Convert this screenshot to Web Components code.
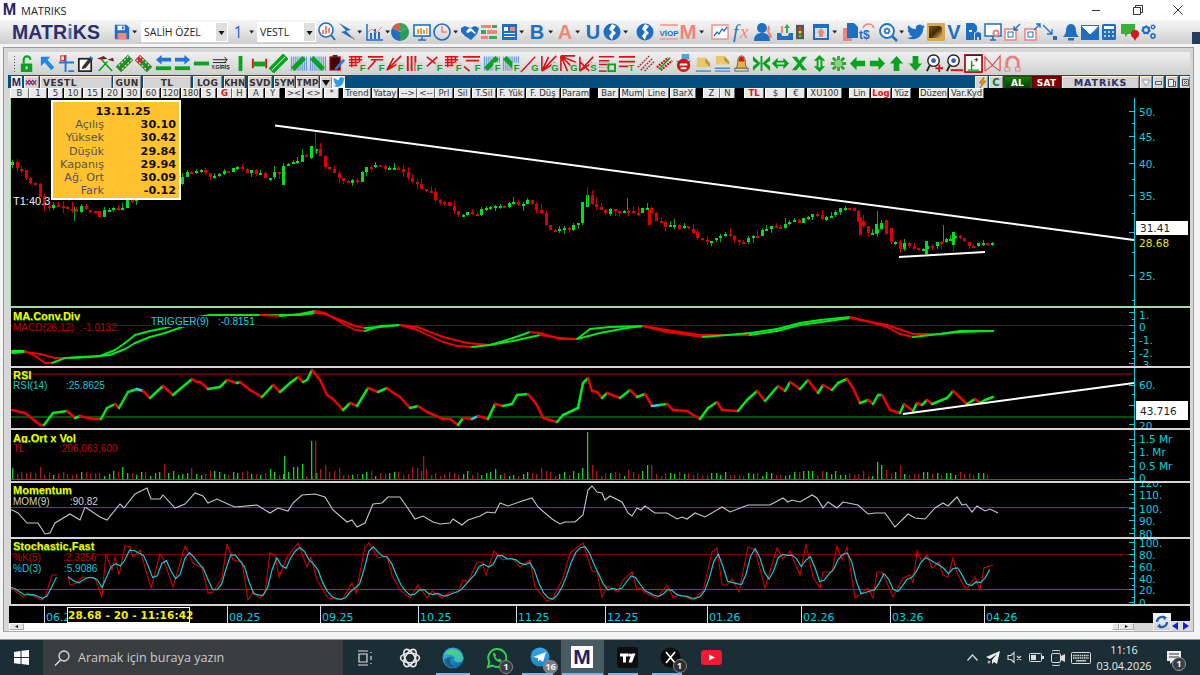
<!DOCTYPE html>
<html lang="tr"><head><meta charset="utf-8"><title>MATRIKS</title>
<style>html,body{margin:0;padding:0;width:1200px;height:675px;overflow:hidden;background:#fff}</style>
</head><body>
<mx-app>
  <mx-titlebar></mx-titlebar>
  <mx-maintoolbar></mx-maintoolbar>
  <mx-window>
    <mx-drawbar></mx-drawbar>
    <mx-tabbar></mx-tabbar>
    <mx-buttons></mx-buttons>
    <mx-panel kind="main">
      <mx-tooltip></mx-tooltip>
      <mx-label style="left:2px;top:98px;color:#eee;background:none;font-size:11px">T1:40.3</mx-label>
    </mx-panel>
    <mx-panel kind="macd">
      <mx-label style="left:2px;top:2px" title-text="MA.Conv.Div"></mx-label>
      <mx-label style="left:2px;top:14px;width:100px;color:#c00000">MACD(26,12)<i style="position:absolute;left:67px;font-style:normal">:-1.0132</i></mx-label>
      <mx-label style="left:140px;top:8px;width:107px;color:#19d3e6">TRIGGER(9)<i style="position:absolute;left:67px;font-style:normal">:-0.8151</i></mx-label>
    </mx-panel>
    <mx-panel kind="rsi">
      <mx-label style="left:2px;top:1px" title-text="RSI"></mx-label>
      <mx-label style="left:2px;top:12px;width:90px;color:#19c6da">RSI(14)<i style="position:absolute;left:53px;font-style:normal">:25.8625</i></mx-label>
    </mx-panel>
    <mx-panel kind="vol">
      <mx-label style="left:2px;top:2px" title-text="Ag.Ort x Vol"></mx-label>
      <mx-label style="left:2px;top:13px;width:103px;color:#c00000">TL<i style="position:absolute;left:46px;font-style:normal">:206,063,600</i></mx-label>
    </mx-panel>
    <mx-panel kind="mom">
      <mx-label style="left:2px;top:1px" title-text="Momentum"></mx-label>
      <mx-label style="left:2px;top:13px;width:85px;color:#d0d0d0">MOM(9)<i style="position:absolute;left:57px;font-style:normal">:90.82</i></mx-label>
    </mx-panel>
    <mx-panel kind="stoch">
      <mx-label style="left:2px;top:1px" title-text="Stochastic,Fast"></mx-label>
      <mx-label style="left:2px;top:13px;width:85px;color:#c00000">%K(5)<i style="position:absolute;left:50px;font-style:normal">:2.3256</i></mx-label>
      <mx-label style="left:2px;top:24px;width:85px;color:#19c6da">%D(3)<i style="position:absolute;left:51px;font-style:normal">:5.9086</i></mx-label>
    </mx-panel>
    <mx-dateaxis></mx-dateaxis>
    <mx-scroll></mx-scroll>
  </mx-window>
  <mx-taskbar></mx-taskbar>
</mx-app>
<script>
const B='#1e6fc4',S='#f2847c',G='#07a31d',R='#d8141a';
const sv=(w,h,inner,vb)=>`<svg xmlns="http://www.w3.org/2000/svg" width="${w}" height="${h}" viewBox="${vb||('0 0 '+w+' '+h)}" style="display:block">${inner}</svg>`;
const TW='M23.95 4.57a10 10 0 0 1-2.82.77 4.96 4.96 0 0 0 2.16-2.72c-.95.55-2 .96-3.12 1.18a4.92 4.92 0 0 0-8.38 4.48C7.69 8.09 4.07 6.13 1.64 3.16a4.82 4.82 0 0 0-.67 2.48c0 1.71.87 3.21 2.19 4.1a4.9 4.9 0 0 1-2.23-.61v.06c0 2.38 1.7 4.37 3.95 4.83a5 5 0 0 1-2.21.08 4.94 4.94 0 0 0 4.6 3.42A9.87 9.87 0 0 1 0 19.54a14 14 0 0 0 7.56 2.21c9.05 0 14-7.5 14-13.98 0-.21 0-.42-.02-.63a9.94 9.94 0 0 0 2.46-2.55z';
const gear=(c,x,y,r)=>`<circle cx="${x}" cy="${y}" r="${r}" fill="none" stroke="${c}" stroke-width="${r*.7}"/><circle cx="${x}" cy="${y}" r="${r*1.35}" fill="none" stroke="${c}" stroke-width="${r*.4}" stroke-dasharray="${r*.6} ${r*.6}"/>`;
const MI={
 save:`<path fill="${B}" d="M2 2h13l3 3v13H2z"/><path fill="#fff" d="M5 3h8v5H5z"/><path fill="${B}" d="M10 4h2v3h-2z"/><path fill="${S}" d="M5 11h10v7H5z"/>`,
 car:`<path d="M6 8h7l-3.500 4z" fill="#222"/>`,
 ss:`<circle cx="9" cy="8" r="7" fill="#fff" stroke="${B}" stroke-width="1.600"/><path fill="${S}" d="M5 8h2v4H5zM8 4h2v8H8zM11 6h2v5h-2z"/><path stroke="${B}" stroke-width="2" d="M14 13l4 5"/>`,
 bolt:`<path fill="${B}" d="M2 1l12 7-5 1 9 9-14-8 5-1.500z"/><path fill="${S}" d="M14 16l4 2-2-4z"/>`,
 bars:`<path fill="none" stroke="${B}" stroke-width="1.500" d="M2 2v16h16"/><path fill="${B}" d="M5 11h2v6H5zM9 7h2v10H9zM13 10h2v7h-2z"/><path stroke="${S}" fill="none" d="M3 10l4-3 4 4 6-6"/>`,
 pie:`<path fill="#e05a4a" d="M10 1a9 9 0 0 0-8 5l8 4z"/><path fill="#3ca35a" d="M10 1a9 9 0 0 1 8 5l-8 4z"/><path fill="${B}" d="M2 6a9 9 0 0 0 8 13v-9z"/><path fill="#2a9a60" d="M18 6a9 9 0 0 1-8 13v-9z"/>`,
 mon:`<rect x="2" y="3" width="16" height="11" fill="#fff" stroke="${B}" stroke-width="1.600"/><path fill="#f09a40" d="M5 7h2v5H5zM8 6h2v6H8zM11 8h2v4h-2zM14 6h1.500v6H14z"/><path stroke="${B}" stroke-width="1.500" d="M10 14v4M6 18h8"/>`,
 clock:`<circle cx="10" cy="10" r="8" fill="none" stroke="${B}" stroke-width="1.600"/><path fill="none" stroke="${S}" stroke-width="1.600" d="M10 4v6h5"/>`,
 hand:`<path fill="${B}" d="M1 6l4-2 5 2 5-2 4 2-2 6-6 6-6-4-4-4z"/><path fill="#fff" d="M8 7l-2 3 2 1 3-2 4 3 1-1-5-5z"/>`,
 lines:`<path fill="${S}" d="M2 3h10v3H2zM8 8h10v4H8zM2 14h7v3H2z"/><path fill="#2fae55" d="M13 3h5v3h-5zM2 8h5v4H2zM10 14h8v3h-8z"/>`,
 news:`<rect x="2" y="2" width="15" height="16" fill="${B}"/><rect x="4" y="5" width="4" height="4" fill="#fff"/><path fill="${S}" d="M10 5h5v4h-5z"/><path fill="#fff" d="M4 11h11v1H4zM4 14h11v1H4z"/>`,
 B:`<text x="10" y="17" text-anchor="middle" font-family="Liberation Sans" font-weight="700" font-size="20" fill="${B}">B</text>`,
 A:`<text x="10" y="17" text-anchor="middle" font-family="Liberation Sans" font-weight="700" font-size="20" fill="${S}">A</text>`,
 U:`<text x="10" y="17" text-anchor="middle" font-family="Liberation Sans" font-weight="700" font-size="20" fill="${B}">U</text>`,
 V:`<text x="10" y="17" text-anchor="middle" font-family="Liberation Sans" font-weight="700" font-size="20" fill="${B}">V</text>`,
 globe:`<circle cx="10" cy="10" r="8.500" fill="${B}"/><path fill="#fff" d="M10 2l-3 5 3 3-3 4 3 4 1-4 3-3-3-3 3-4z"/>`,
 viop:`<path fill="#f5a8a0" d="M1 2h18v2H1zM1 16h18v2H1z"/><text x="10" y="13.500" text-anchor="middle" font-family="Liberation Sans" font-weight="700" font-size="8" fill="${B}">VİOP</text>`,
 M:`<text x="10" y="17" text-anchor="middle" font-family="Liberation Sans" font-weight="700" font-size="20" fill="${S}" textLength="17" lengthAdjust="spacingAndGlyphs">M</text>`,
 line:`<rect x="2" y="3" width="16" height="14" fill="#fff" stroke="${S}" stroke-width="1.300"/><path fill="none" stroke="${B}" stroke-width="1.300" d="M4 14l3-4 2 2 3-5 2 2 3-4"/>`,
 fx:`<text x="0" y="16" font-family="Liberation Serif" font-style="italic" font-size="19" fill="${B}">f</text><text x="7" y="16" font-family="Liberation Serif" font-style="italic" font-size="19" fill="${S}">x</text>`,
 user:`<circle cx="9" cy="6" r="5" fill="${B}"/><path fill="${B}" d="M1 19c0-7 4-8 8-8s8 1 8 8z"/><path fill="${S}" d="M15 3c3 2 2 6 1 7 2 1 3 3 3 6h-3c0-3-1-5-2-6z"/>`,
 inbox:`<path fill="${B}" d="M2 11h4l1 3h6l1-3h4v7H2z"/><path fill="#2fae55" d="M12 2l3 4h-2v5h-2V6H9z"/><path fill="${S}" d="M6 4h2v7H6z"/>`,
 traffic:`<rect x="5" y="1" width="10" height="18" fill="#555"/><circle cx="10" cy="5" r="2" fill="#e33"/><circle cx="10" cy="10" r="2" fill="#fc0"/><circle cx="10" cy="15" r="2" fill="#3c3"/>`,
 upbox:`<rect x="2" y="2" width="16" height="16" fill="${B}"/><rect x="4" y="6" width="12" height="10" fill="#cfe0f5"/><path fill="${S}" d="M10 6l4 5h-2v4H8v-4H6z"/>`,
 docs:`<path fill="${S}" d="M3 6h9v13H3z"/><path fill="${B}" d="M7 1h7l4 4v11H7z"/>`,
 ts:`<path fill="none" stroke="${S}" stroke-width="1.500" d="M5 6a6 6 0 0 1 9-3"/><text x="1" y="17" font-family="Liberation Sans" font-weight="700" font-size="12" fill="${B}">t$</text><path fill="none" stroke="${S}" stroke-width="1.500" d="M14 3l2 3"/>`,
 sg:`<circle cx="9" cy="9" r="7" fill="#fff" stroke="${B}" stroke-width="1.800"/>${gear(B,9,9,2.200)}<path stroke="${B}" stroke-width="2.500" d="M14 14l5 5"/>`,
 tw:`<svg x="1" y="1" width="18" height="18" viewBox="0 0 24 24"><path fill="${B}" d="${TW}"/></svg>`,
 gold:`<defs><linearGradient id="gg" x1="0" y1="0" x2="1" y2="1"><stop offset="0" stop-color="#7d5a1c"/><stop offset=".5" stop-color="#3c2a0a"/><stop offset="1" stop-color="#f0c060"/></linearGradient></defs><rect x="1" y="1" width="18" height="18" rx="1" fill="#d8a850"/><path fill="url(#gg)" d="M3 4h11l2 2v10H3z"/>`,
 files:`<path fill="${B}" d="M3 1h8l3 3v5l-3 2v7H3z"/><path fill="#fff" d="M6 8h3v2H6z"/><path fill="${B}" d="M12 11l3-1 3 1v7h-2v-3h-2v3h-2z"/>`,
 mg:`<rect x="2" y="2" width="16" height="12" fill="#fff" stroke="${B}" stroke-width="1.500"/><path stroke="${B}" stroke-width="1.500" d="M7 18h6M10 14v4"/>${gear(S,13,11,2.500)}`,
 bin:`<rect x="3" y="7" width="11" height="11" fill="#fff" stroke="${S}" stroke-width="1.600"/><rect x="6" y="10" width="5" height="5" fill="none" stroke="${B}"/><path fill="none" stroke="${B}" stroke-width="1.300" d="M18 2l-6 6M12 4v4h4"/>`,
 bout:`<rect x="3" y="7" width="11" height="11" fill="#fff" stroke="${S}" stroke-width="1.600"/><rect x="6" y="10" width="5" height="5" fill="none" stroke="${B}"/><path fill="none" stroke="${B}" stroke-width="1.300" d="M12 8l6-6M14 2h4v4"/>`,
 dot:`<path fill="none" stroke="${B}" stroke-width="1.300" d="M3 3l9 9M12 7v5H7"/><rect x="13" y="14" width="4" height="4" fill="${B}"/>`,
 bell:`<path fill="${B}" d="M10 2c4 0 5 4 5 7s3 6 3 6H2s3-3 3-6 1-7 5-7z"/><rect x="7" y="16" width="6" height="2.500" fill="${B}"/>`,
 mail:`<rect x="1" y="3" width="18" height="15" fill="${B}"/><path fill="#fff" stroke="#fff" d="M2 4l8 8 8-8"/><path fill="${S}" d="M3 6l7 7 7-7v1l-7 6z"/>`,
 calc:`<rect x="3" y="2" width="14" height="16" rx="1.500" fill="${B}"/><rect x="5" y="4" width="10" height="3" fill="#fff"/><path fill="#bcd" d="M5 9h2v2H5zM9 9h2v2H9zM13 9h2v2h-2zM5 13h2v2H5zM9 13h2v2H9zM13 13h2v2h-2z"/>`,
 chat:`<path fill="#3cae3c" d="M1 2h14v10H8l-3 3v-3H1z"/><circle cx="15" cy="12" r="4" fill="${R}"/><path fill="${R}" d="M13 15h4l-2 4z"/>`,
 gears:`${gear(B,8,8,3)}${gear(B,15,5,1.700)}${gear(B,15,14,2)}`,
};
const F=(c,l,a)=>`${a}<path fill="#d6d6d6" d="M12 9h8v9h-8z"/><text x="19.500" y="17.500" text-anchor="end" font-family="Liberation Sans" font-weight="700" font-size="10" fill="${c}">${l}</text>`;
const hatch=`<path fill="#f6d0d0" d="M2 3h14v11H2z"/><path fill="none" stroke="${R}" stroke-width="1.600" d="M2 3h14M2 6h14M2 9h12M2 12h9M5 3v11M9 3v9M13 3v6"/>`;
const diagC=(c,w)=>`<path stroke="${c}" stroke-width="${w}" d="M4 16L16 4"/>`;
const dots=`<path stroke="#5a90e0" stroke-width="5" stroke-dasharray="1 1" d="M2 5h17M2 8h17M2 12h17M2 15h17"/>`;
const DI={
 lock:`<rect x="3" y="10" width="12" height="9" rx="1" fill="${G}"/><path fill="none" stroke="${G}" stroke-width="2.200" d="M6 10V6a3.500 3.500 0 0 1 7 0"/><rect x="8" y="13" width="2" height="3" fill="#fff"/>`,
 nw:`<path fill="#1a8ae8" d="M3 3h10l-3 3 7 8-3 3-7-8-4 4z"/>`,
 cross:`<path fill="none" stroke="#1a78e0" stroke-width="2" d="M9 1v18M2 9h16M12 18h6"/><rect x="4" y="2" width="4" height="5" fill="none" stroke="${R}" stroke-width="1"/>`,
 note:`<rect x="3" y="5" width="13" height="13" fill="#fff" stroke="#222" stroke-width="1.800"/><path fill="#333" d="M7 13l8-10 3 2-8 10-4 1z"/><path fill="#3a90e0" d="M14 3l1-1 3 2-1 2z"/>`,
 tools:`<path fill="none" stroke="${G}" stroke-width="1.600" d="M3 18L12 8M17 18L6 6"/><path fill="#8a1c1c" d="M1 5l7-3 4 3-6 1zM12 6l6-2 1 4z"/>`,
 dc1:`<g transform="rotate(45 10 10)"><rect x="6" y="1" width="8" height="18" fill="#2a8a2a"/><path stroke="#fff" stroke-dasharray="2 2" d="M7.500 2v16M12.500 2v16"/></g>`,
 dc2:`<g transform="rotate(-45 10 10)"><rect x="6" y="6" width="8" height="13" fill="#2a8a2a"/><rect x="6" y="1" width="8" height="6" fill="#c83030"/><path stroke="#fff" stroke-dasharray="2 2" d="M7.500 2v16M12.500 2v16"/></g>`,
 la:`<path fill="#1a78e0" d="M2 6l6-5v3h10v4H8v3z"/><rect x="2" y="13" width="16" height="4" fill="${G}"/>`,
 ra:`<path fill="#1a78e0" d="M18 6l-6-5v3H2v4h10v3z"/><rect x="2" y="13" width="16" height="4" fill="${G}"/>`,
 minus:`<rect x="2" y="8" width="16" height="4" fill="${G}"/>`,
 yg:`<path fill="none" stroke="#222" d="M2 6h15M14 3l3 3-3 3M2 9h14"/><text x="10" y="16" text-anchor="middle" font-family="Liberation Sans" font-weight="700" font-size="5.500" fill="#222">Y.GİRİŞ</text>`,
 vb:`<rect x="8" y="2" width="4" height="16" fill="${G}"/>`,
 hh:`<rect x="4" y="8" width="12" height="5" fill="${G}"/><path stroke="${R}" stroke-width="2" d="M3 5v10M17 5v10"/>`,
 d1:`<g transform="rotate(45 10 10)"><rect x="6" y="-1" width="8" height="22" fill="${G}"/><path stroke="#c9f0c9" d="M10 0v20"/></g>`,
 d2:`${dots}${diagC(G,5)}`,
 d3:`${dots}<path stroke="${G}" stroke-width="5" d="M4 4l12 12"/>`,
 pen:`<rect x="3" y="3" width="11" height="14" fill="#400" stroke="${R}"/><rect x="6" y="1" width="5" height="3" fill="#333"/><path fill="#2a80d0" d="M9 14l8-9 2 2-8 9-3 1z"/>`,
 f1:F(G,'F',hatch), 
 f2:F(G,'F',`<path fill="none" stroke="${R}" stroke-width="1.700" d="M2 3h16M5 6h13M2 16l8-9"/>`),
 f3:F(G,'F',`<path fill="none" stroke="${R}" stroke-width="1.700" d="M2 17L17 2M2 17l12-7M2 17l7-13"/>`),
 f4:F(G,'F',`<path fill="${R}" d="M3 2h2v16H3zM7 2h2v16H7zM11 2h2v16h-2z"/>`),
 f5:F(G,'F',`<path fill="none" stroke="${R}" stroke-width="1.700" d="M3 3l13 10M3 13L14 3"/>`),
 f6:F(G,'F',hatch),
 f7:F(G,'F',`<path fill="none" stroke="${R}" stroke-width="1.700" d="M1 3h18M4 7h14M2 13l6 5"/>`),
 f8:F(G,'F',`${dots}${diagC(G,5)}`),
 f9:F(G,'F',`${dots}<path stroke="${G}" stroke-width="5" d="M4 4l10 10"/>`),
 g1:F(G,'G',`<path stroke="${R}" stroke-width="1.500" d="M1 19L16 3"/>`),
 g2:F(G,'G',`<path fill="none" stroke="${R}" stroke-width="1.700" d="M2 18V2M2 18L17 2M2 18L16 9M2 18L9 3"/>`),
 g3:F(G,'G',`<path fill="none" stroke="${R}" stroke-width="1.700" d="M2 2h15M2 2v16M2 2l15 15M2 2l16 7M2 2l7 16"/>`),
 s1:F(G,'S',`<path fill="none" stroke="${R}" stroke-width="1.700" d="M2 18V3M2 18L16 3M2 18l13-9M2 8l10 10"/>`),
 o1:`<path stroke="${R}" stroke-width="1.600" d="M2 3h16M2 7h11M2 11h9"/><path stroke="#888" stroke-dasharray="1 1" d="M2 9h11M2 14h9"/><rect x="12" y="11" width="7" height="7" fill="none" stroke="${G}" stroke-width="2"/><path stroke="${R}" stroke-width="1.600" d="M2 18h8"/>`,
 o2:`<path stroke="${R}" stroke-width="1.800" d="M2 3h17M2 8h17M2 13h10"/><text x="15" y="18" text-anchor="middle" font-family="Liberation Sans" font-weight="700" font-size="9" fill="${G}">T</text>`,
 hd:`<path stroke="#b03030" stroke-width="1.500" stroke-dasharray="2 1" d="M2 14L14 2M5 17L17 5M9 18L19 8"/>`,
 rg:`<path stroke="${R}" stroke-width="2.500" stroke-dasharray="2 1" d="M2 14L14 4M6 17L18 7"/><path stroke="${G}" stroke-width="1.500" d="M4 16L16 4"/>`,
 dev:`<rect x="7" y="0" width="8" height="6" fill="#4aa8d8"/><circle cx="9" cy="12" r="7" fill="${R}"/><path fill="#fff" d="M5 10h8v2H5zM6 14h6v2H6z"/><path stroke="#222" d="M2 7l3 3M16 7l-3 3"/>`,
 sl1:`<path fill="#e8c868" d="M3 4h9l5 6v4H3z"/><path fill="#b89838" d="M12 4l5 6v4l-5-5z"/><path stroke="#3a8ae0" stroke-width="1.500" d="M2 18h16"/>`,
 sl2:`<path fill="#e8c868" d="M3 2h9l5 6v3H3z"/><path fill="#b89838" d="M12 2l5 6v3l-5-4z"/><path stroke="#3a8ae0" stroke-width="1.500" d="M2 15h16M2 18h16"/>`,
 abell:`<path fill="#e8b440" stroke="#665" d="M10 2c3 0 4 3 4 7s2 6 2 6H4s2-2 2-6 1-7 4-7z"/><path fill="${R}" d="M8 3h4l1 5H7z"/><rect x="3" y="15" width="14" height="3" fill="#d8d8c0" stroke="#665"/>`,
 ins:`<path fill="${G}" d="M1 2l8 8-8 8v-5L5 10 1 7zM19 2l-8 8 8 8v-5l-4-3 4-3zM9 2h2v16H9z"/>`,
 lr:`<path fill="${G}" d="M1 10l6-6v3h6V4l6 6-6 6v-3H7v3z"/><path fill="#d8ffd8" d="M6 9h8v2H6z"/>`,
 xg:`<path fill="${G}" d="M2 3h5l3 4 3-4h5l-6 7 6 7h-5l-3-4-3 4H2l6-7z"/>`,
 ud:`<path fill="${G}" d="M10 1l6 6h-3v6h3l-6 6-6-6h3V7H4z"/><path fill="#d8ffd8" d="M9 6h2v8H9z"/>`,
 star:`<path stroke="#2aa82a" stroke-width="3" d="M10 2v16M2 10h16M4 4l12 12M16 4L4 16"/><circle cx="10" cy="10" r="4" fill="#8ad08a"/>`,
 al:`<path fill="${G}" d="M9 3L2 10l7 7v-4h9V7H9z"/>`,
 ar:`<path fill="${G}" d="M11 3l7 7-7 7v-4H2V7h9z"/>`,
 au:`<path fill="${G}" d="M10 2l7 8h-4v8H7v-8H3z"/>`,
 ad:`<path fill="${G}" d="M10 18l7-8h-4V2H7v8H3z"/>`,
 ep:`<circle cx="9" cy="7" r="6" fill="#fff" stroke="#222" stroke-width="1.500"/><circle cx="9" cy="7" r="2.500" fill="#2a60c0"/><path stroke="#222" stroke-width="2" d="M5 12l-3 6"/><path fill="${R}" d="M11 14h3v-3h2v3h3v2h-3v3h-2v-3h-3z"/>`,
 em:`<circle cx="9" cy="7" r="6" fill="#fff" stroke="#222" stroke-width="1.500"/><circle cx="9" cy="7" r="2.500" fill="#2a60c0"/><path stroke="#222" stroke-width="2" d="M5 12l-3 6"/><path fill="${R}" d="M6 16h13v2H6z"/>`,
 sel:`<rect x="1" y="1" width="18" height="18" fill="#fff" stroke="#a01010" stroke-width="1.800"/><path stroke="#222" d="M1.500 1.500h17"/><path fill="none" stroke="${G}" stroke-width="1.500" d="M4 17h12M8 17V7M8 12h3"/><path stroke="#222" d="M13 4v4M11 6h4"/>`,
 bow:`<path fill="none" stroke="#d85050" stroke-width="1.200" d="M2 18V3l8 9 8-10v16M2 18L10 12l8 6"/>`,
 mag:`<path fill="none" stroke="#e88080" stroke-width="3" d="M4 14V9a6 6 0 0 1 12 0v5"/><path fill="none" stroke="#e88080" d="M2 14h5v4H2zM13 14h5v4h-5z"/>`,
};
function place(origin,items){let p=origin;return items.map(([x0,x1,html,cls])=>{const r=`<span class="it ${cls||''}" style="margin-left:${(x0-p).toFixed(2)}px;width:${(x1-x0).toFixed(2)}px">${html}</span>`;p=x1;return r;}).join('');}
function def(name,fn){customElements.define(name,class extends HTMLElement{constructor(){super();this.attachShadow({mode:'open'});}connectedCallback(){if(!this.shadowRoot.innerHTML)this.shadowRoot.innerHTML=fn(this);}});}

def('mx-app',()=>`<style>:host{display:flex;flex-direction:column;width:1200px;height:675px;overflow:hidden;font-family:"Liberation Sans",sans-serif}</style><slot></slot>`);

def('mx-titlebar',()=>`<style>:host{display:flex;align-items:center;height:20px;background:#fff;position:relative;font:11px "Open Sans",sans-serif;color:#222}
.m{font:700 17px "Liberation Sans";color:#26235f;margin:0 4px 0 2px;line-height:20px;width:15px;text-align:center;transform:scaleX(.95)}
.w{margin-left:auto;display:flex}.w span{width:40px;height:20px;display:flex;align-items:center;justify-content:center}</style>
<span class="m">M</span><span>MATRIKS</span><span class="w"><span style="margin-right:2px">${sv(10,10,'<path stroke="#333" d="M1 5.500h8"/>')}</span><span>${sv(10,10,'<path fill="none" stroke="#333" d="M.5 2.500h7v7h-7zM2.500 2.500v-2h7v7h-2"/>')}</span><span style="margin-right:2px">${sv(10,10,'<path stroke="#333" d="M.5.500l9 9M9.500.500l-9 9"/>')}</span></span>`);

const mainItems=[['save',122,18],['car',135,14],['C1',0,0],['n1',238,14],['car',252,14],['C2',0,0],
['ss',327,20],['bolt',347,20],['car',360,14],['bars',375,20],['car',388,14],['pie',400,20],['mon',422,20],['clock',442,20],['car',456,14],['hand',470,20],['lines',489,20],['news',510,20],['car',522,14],['B',537,20],['car',551,14],['A',565,20],['car',578,14],['U',593,20],['globe',612,20],['car',626,14],['globe',645,20],['viop',669,20],['M',688,20],['car',702,14],['line',720,20],['fx',743,20],['user',763,20],['inbox',785,20],['traffic',800,16],['upbox',821,20],['car',835,14],['docs',850,20],['ts',868,20],['sg',888,20],['car',902,14],['tw',916,20],['gold',936,20],['V',954,20],['files',973,20],['mg',993,20],['bin',1012,20],['bout',1032,20],['dot',1050,20],['bell',1071,20],['mail',1090,20],['calc',1109,20],['chat',1130,20],['gears',1148,20]];
def('mx-maintoolbar',()=>{
 const combo=(t,w)=>`<span class="cb" style="width:${w}px">${t}<b>${sv(9,18,'<path d="M1.500 8h6L4.500 12z" fill="#111"/>')}</b></span>`;
 const its=mainItems.map(([n,c,w])=>{
  if(n==='C1')return [141,228,combo('SALİH ÖZEL',87)];
  if(n==='C2')return [257,316,combo('VESTL',59)];
  if(n==='n1')return [c-w/2,c+w/2,'<span class="one">1</span>'];
  return [c-w/2,c+w/2,sv(20,20,MI[n])];
 });
 return `<style>:host{display:flex;align-items:center;height:24px;position:relative;background:linear-gradient(#f5f5f5,#ececec 30%,#cdcdcd);box-sizing:border-box;padding-left:12px}
 .logo{font:700 19.500px/24px "Liberation Sans";color:#2b2f6e;width:90px;letter-spacing:.1px;transform:scaleY(1.03)}.logo i{font-style:normal;color:#3b73b9}
 .it{display:inline-flex;justify-content:center;align-items:center;flex:none;height:22px}
 .cb{position:relative;display:block;height:20px;background:#fff;font:10.500px/20px "Open Sans",sans-serif;color:#222;padding-left:3px;box-sizing:border-box}
 .cb b{position:absolute;right:1px;top:1px;width:11px;height:18px;background:#dedede;display:flex;justify-content:center}
 .one{font:16px/22px "Open Sans",sans-serif;color:${B}}
 .cnr{position:absolute;right:0;top:12px;width:8px;height:12px;background:#233b5c}</style>
 <span class="logo">MATR<i>i</i>KS</span>${place(102,its)}<span class="cnr"></span>`;
});

def('mx-window',()=>`<style>:host{display:block;height:596px;box-sizing:border-box;padding:3px 6px 0 3px;background:#f4f4f4;border-bottom:1px solid #999;position:relative}
.f{box-sizing:border-box;height:585px;border:1px solid #9a9a9a;border-bottom-color:#aaa;padding:4px 3px 0 4px;background:#d6d6d6;display:flex;flex-direction:column}
</style><div class="f"><slot></slot></div>`);

const drawNames=['lock','nw','cross','note','tools','dc1','dc2','la','ra','minus','yg','vb','hh','d1','d2','d3','pen','f1','f2','f3','f4','f5','f6','f7','f8','f9','g1','g2','g3','s1','o1','o2','hd','rg','dev','sl1','sl2','abell','ins','lr','xg','ud','star','al','ar','au','ad','ep','em','sel','bow','mag'];
def('mx-drawbar',()=>`<style>:host{display:flex;align-items:center;height:23px;flex:none;background:linear-gradient(#f0f0f0,#cfcfcf);box-sizing:border-box;padding-left:5px}
.g{width:5.350px;flex:none}.it{width:19.300px;flex:none;display:flex;justify-content:center}</style>
<span class="g">${sv(3,16,'<path stroke="#556" stroke-dasharray="1 2" d="M1.500 0v16"/>')}</span>${drawNames.map(n=>`<span class="it">${sv(19,19,DI[n],'0 0 20 20')}</span>`).join('')}`);

const tabs=[[11,22,'M','m'],[24,39,sv(15,11,`<path stroke="#d01818" stroke-width="1.500" fill="none" d="M1 8l4-5 4 5 4-5"/><path stroke="#2a40b0" stroke-width="1.200" fill="none" d="M1 3l4 5 4-5 4 5"/>`),'n'],[40,112,'VESTL','l'],[113,141,'GUN'],[143,191,'TL'],[193,222,'LOG'],[224,245,'KHN'],[248,272,'SVD'],[274,295,'SYM'],[296,319,'TMP'],[320,332,sv(10,8,'<path d="M1 1h8L5 7z" fill="#111"/>'),'n'],[332,345,sv(12,12,`<path fill="#2f9be8" d="${TW}"/>`,'0 0 24 24'),'b'],
[975,988,sv(10,11,'<path fill="#e89010" stroke="#a05000" stroke-width=".5" d="M7 0L2 6h3l-2 5 6-7H6z"/>'),'n'],[989,1003,'C','cc'],[1004,1031,'AL','al'],[1032,1061,'SAT','sat'],[1062,1139,'MATRiKS','mk'],[1140,1152,sv(10,8,'<path fill="#eee" stroke="#999" d="M1 1h8L5 7z"/>'),'n'],[1153,1164,sv(7,4,'<rect x=".5" y=".5" width="6" height="3" fill="#ddd" stroke="#666"/>'),'n'],[1166,1178,sv(8,8,'<path fill="#eee" stroke="#555" d="M.5.500h5v7h-5zM5.500 2.500h2v5h-2z"/>'),'n'],[1180,1190,sv(7,7,'<path stroke="#555" fill="none" d="M.5.500h6v6h-6zM2 2l3 3M5 2l-3 3"/>'),'n']];
def('mx-tabbar',()=>`<style>:host{display:flex;height:13px;flex:none;background:#03507e;align-items:stretch;box-sizing:border-box;padding-top:1px}
.it{display:flex;align-items:center;justify-content:center;flex:none;background:#d4d4d4;font:700 9px/12px "DejaVu Sans",sans-serif;color:#333;border-left:1px solid #f4f4f4;border-top:1px solid #f4f4f4;border-right:1px solid #8a8a8a;box-sizing:border-box;overflow:hidden;height:12px;letter-spacing:.2px}
.m{font:700 11px/12px "Liberation Sans";color:#26235f;background:#eee;border:0}.l{justify-content:flex-start;padding-left:2px;letter-spacing:.5px}.b{background:#fff;border:0}
.cc{color:#0a7a30;font-size:10px}.al{background:linear-gradient(#0c7d0c,#063f06);color:#fff;border-color:#0a5a0a}.sat{background:#7a0000;color:#fff;border-color:#600}.mk{color:#2b2f6e;font-size:9.500px;letter-spacing:.9px}</style>
${place(8,tabs.map(t=>[t[0],t[1],t[2],t[3]||'']))}`);

const btns=[[10,29,'B'],[29,47,'1'],[48,63,'5'],[64,82,'10'],[83,102,'15'],[103,122,'20'],[123,141,'30'],[142,160,'60'],[161,180,'120'],[181,200,'180'],[201,216,'S'],[217,232,'G','r'],[232,247,'H'],[248,264,'A'],[265,280,'Y'],[285,303,'&gt;&lt;'],[304,323,'&lt;&gt;'],[324,339,'*'],[343,371,'Trend'],[372,398,'Yatay'],[399,417,'--&gt;'],[417,435,'&lt;--'],[435,453,'Prl'],[454,471,'Sil'],[472,496,'T.Sil'],[497,525,'F. Yük'],[526,560,'F. Düş'],[561,590,'Param'],[598,619,'Bar'],[620,644,'Mum'],[644,669,'Line'],[670,696,'BarX'],[703,720,'Z'],[720,735,'N'],[744,764,'TL','rb'],[765,786,'$'],[787,805,'€'],[807,842,'XU100'],[849,870,'Lin'],[871,891,'Log','rb'],[892,911,'Yüz'],[919,948,'Düzen'],[949,984,'Var.Kyd']];
def('mx-buttons',()=>`<style>:host{display:flex;height:10px;flex:none;background:#000;margin-left:2px;overflow:hidden}
.it{flex:none;box-sizing:border-box;height:10px;background:#e8e8e8;border-top:1px solid #fff;border-left:1px solid #fff;border-right:1px solid #666;font:8.500px/9px "DejaVu Sans",sans-serif;color:#333;text-align:center;overflow:hidden;white-space:nowrap}
.r{color:#e01010;font-weight:700}.rb{color:#f01010;font-weight:700}</style>${place(10,btns.map(b=>[b[0],b[1],b[2],b[3]||'']))}`);

/* data */
const rnd=(s=>()=>(s=(s*16807)%2147483647)/2147483647)(4242);
const at=(p,x)=>{if(x<=p[0][0])return p[0][1];for(let i=1;i<p.length;i++)if(x<=p[i][0]){const[a,b]=p[i-1],[c,d]=p[i];return b+(d-b)*(x-a)/((c-a)||1);}return p[p.length-1][1];};
const flat=a=>{const r=[];for(let i=0;i<a.length;i+=2)r.push([a[i],a[i+1]]);return r;};
const PRICE=flat([12,165,16,167,20,167,24,172,26,176,30,180,33,182,38,190,42,205,45,208,50,205,75,210,80,208,85,209,90,211,95,213,102,218,105,208,110,207,117,207,123,205,130,200,178,183,180,182,190,170,200,171,210,176,220,176,227,170,240,168,250,171,262,176,270,176,280,170,290,163,300,158,310,152,318,152,323,165,330,168,338,175,345,182,355,182,365,170,375,166,385,167,395,168,400,168,405,174,412,185,420,187,424,190,430,193,440,201,446,205,452,211,460,213,470,214,480,212,490,208,500,208,510,205,520,202,530,200,535,205,540,212,545,222,550,229,558,230,565,229,570,228,578,226,582,210,587,197,592,205,600,208,605,211,612,211,620,211,630,212,640,210,648,210,655,218,660,224,670,224,680,228,690,230,700,239,707,243,715,238,722,233,727,238,735,240,745,240,752,236,760,233,770,228,780,228,788,222,795,219,800,222,805,218,812,213,816,218,822,218,830,216,838,211,845,206,850,207,855,212,860,225,865,231,872,232,876,228,885,224,890,245,895,240,900,248,905,245,910,243,915,249,920,251,925,245,930,247,935,245,945,240,950,240,955,235,960,238,965,243,970,246,975,245,980,246,985,243,990,243,994,243]);
const CX=[];for(let x=12;x<=995;x+=4.6)CX.push(x);
const dirs=[];
function candles(){
 let o='',prev=at(PRICE,12);
 CX.forEach((x,i)=>{
  const c=at(PRICE,x)+(rnd()-.5)*5.5;const up=c<prev;dirs[i]=up;
  const t=Math.min(c,prev),b=Math.max(Math.max(c,prev),t+1.5);
  const wt=t-rnd()*rnd()*8,wb=b+rnd()*rnd()*6;
  const col=up?'#00e020':'#dc0000',wc=up?'#10a81c':'#c80000',X=Math.round(x);
  o+=`<rect x="${X}" y="${wt.toFixed(0)}" width="1" height="${Math.max(wb-wt,1).toFixed(0)}" fill="${wc}"/><rect x="${X-1}" y="${t.toFixed(0)}" width="3" height="${Math.max(Math.round(b-t),2)}" fill="${col}"/>`;
  prev=c;
 });
 const ov=[[311,146,12,'#00e020'],[315,130,23,'#c80000',1],[283,168,17,'#00e020'],[582,202,16,'#00e020'],[587,187,18,'#c80000',1],[877,211,26,'#10a81c',1],[876,224,10,'#00e020'],[886,220,14,'#dc0000'],[926,241,13,'#00e020'],[943,225,17,'#10a81c',1],[953,232,13,'#00e020'],[953,245,6,'#c80000',1],[649,210,15,'#dc0000'],[627,198,12,'#10a81c',1],[860,217,18,'#dc0000'],[74,207,14,'#10a81c',1]];
 ov.forEach(([x,y,h,c,w])=>{o+=`<rect x="${x-(w?0:1)}" y="${y}" width="${w?1:3}" height="${h}" fill="${c}"/>`;});
 return o;
}
function colorLine(p,w,opts={}){let o='',last='#0f0';for(let i=1;i<p.length;i++){const[a,b]=p[i-1],[c,d]=p[i];let col=d<b?'#00e81c':d>b?'#f00000':last;(opts.cy||[]).forEach(r=>{if(c>r[0]&&c<=r[1])col='#25d5f0';});last=col;o+=`<path d="M${a} ${b}L${c} ${d}" stroke="${col}" stroke-width="${w}" stroke-linecap="round"/>`;}return o;}
const poly=(p,c,w)=>`<polyline points="${p.map(q=>q.join(',')).join(' ')}" fill="none" stroke="${c}" stroke-width="${w}"/>`;
const hl=(y,c,w=1)=>`<rect x="11" y="${y}" width="1123" height="${w}" fill="${c}"/>`;
const MF=flat([12,351,25,351,35,356,45,363,52,363,65,358,80,357,100,356,115,350,125,343,135,335,150,331,165,328,185,322,197,317,210,315,240,315,260,315,280,316,300,314,315,311,325,313,340,322,355,330,365,331,380,326,400,325,417,330,443,342,457,346,472,347,490,345,513,338,530,332,540,333,560,339,577,339,590,329,610,327,643,326,667,332,703,337,727,335,750,333,777,329,800,323,820,320,850,317,870,322,887,327,900,334,913,337,940,334,960,331,993,331]);
const MS=flat([12,353,25,352,40,354,55,358,70,358,90,357,110,355,125,349,135,343,150,337,165,333,185,326,197,322,220,316,260,315,280,315,300,315,315,313,325,314,340,320,355,326,365,328,380,327,400,325,417,327,443,337,467,343,490,345,513,341,540,335,560,338,577,339,600,333,627,328,643,326,667,330,700,335,727,335,750,335,777,331,800,325,850,318,887,325,913,334,940,334,960,332,993,331]);
const RS=flat([12,410,25,413,35,421,40,425,44,425,50,417,53,413,67,411,75,418,80,416,93,419,101,419,107,408,115,404,119,408,128,392,137,389,143,391,150,398,163,386,173,395,180,389,192,379,197,382,200,382,208,389,220,387,227,380,237,383,240,382,250,390,262,397,273,385,280,392,290,383,298,377,303,382,307,380,312,370,320,380,327,395,333,399,343,410,350,403,357,406,368,388,378,392,387,388,392,392,400,397,410,408,418,406,427,412,443,419,450,419,458,425,463,418,472,419,478,416,488,419,495,404,503,406,512,404,517,395,528,394,537,405,543,418,557,422,563,415,578,408,583,383,588,378,592,391,597,392,602,398,607,393,620,398,630,390,637,397,645,394,652,406,660,405,667,404,673,410,687,411,700,419,708,408,717,402,722,410,738,411,747,400,757,391,765,401,778,386,785,391,790,382,800,389,808,380,818,393,823,385,832,390,838,383,847,379,853,388,860,403,868,400,873,404,878,395,882,395,890,410,900,413,904,404,913,411,917,403,922,405,927,400,932,404,947,398,953,391,967,404,975,399,980,403,985,400,993,397]);
const MO=flat([10,509,18,513,27,523,38,523,45,534,50,533,55,523,70,514,80,520,85,507,100,517,107,520,120,504,124,508,135,494,147,488,151,499,160,499,163,495,175,508,185,504,195,493,203,496,208,503,217,499,230,505,235,507,257,505,270,513,278,508,288,511,293,503,302,495,315,494,325,497,333,510,347,522,352,520,357,527,365,523,373,504,382,503,388,497,400,497,407,507,415,519,423,516,433,522,440,524,450,523,453,519,462,525,468,520,480,516,487,512,495,513,500,503,508,506,522,501,532,498,538,507,552,519,560,524,565,522,575,522,583,515,588,490,592,486,597,492,602,493,605,500,610,496,622,502,628,513,632,516,637,508,641,510,645,506,655,513,667,513,677,519,682,517,687,519,695,513,705,517,722,507,730,512,748,505,770,505,783,498,788,502,792,500,800,502,812,495,817,498,823,508,828,502,837,508,843,502,858,505,868,514,875,513,885,513,895,527,908,514,915,518,925,519,935,508,943,503,948,506,957,497,962,505,966,504,972,512,977,506,985,511,990,509,998,513]);
const SK=flat([10,587,23,597,27,593,42,600,45,597,52,575,57,575,68,575,70,585,77,583,82,577,95,578,102,597,106,554,112,570,115,557,119,575,125,546,130,547,133,557,140,550,151,588,160,554,163,558,173,587,185,546,193,563,202,568,208,593,213,592,222,578,227,544,233,560,242,562,248,600,253,592,260,598,265,592,270,553,275,555,279,577,287,557,298,543,307,567,311,557,317,580,328,598,342,600,352,583,356,593,365,547,369,543,378,558,387,556,392,575,400,590,410,598,418,585,427,598,432,591,442,598,450,592,458,592,463,580,468,582,477,562,482,562,486,575,494,551,503,560,512,558,520,567,530,560,535,587,547,601,553,598,563,578,570,553,583,543,592,571,597,572,602,597,607,586,618,592,623,580,632,572,637,590,640,588,645,593,657,598,667,585,673,597,680,595,693,600,703,591,712,552,717,548,722,585,727,585,732,579,739,592,748,547,755,550,765,588,777,548,783,559,790,551,800,575,806,544,813,577,820,588,823,572,832,572,837,546,842,560,847,547,855,598,868,588,873,598,877,572,882,572,893,597,903,578,910,575,913,583,917,551,922,562,927,555,932,568,939,562,943,575,948,577,953,558,957,573,966,590,975,577,980,590,984,568,993,565]);
const SD=(()=>{const o=[];for(let x=10;x<=993;x+=4.6){const v=(at(SK,x)+at(SK,x-3.500)+at(SK,x-7))/3;o.push([+x.toFixed(1),+v.toFixed(1)]);}return o;})();
function vols(){
 const ov={12:11,39:12,163:15,124:12,190:11,270:10,293:12,298:12,302:15,319:10,324:14,332:8,337:11,413:12,418:11,427:10,494:10,543:11,582:11,591:14,596:8,627:9,649:14,877:17,881:14,885:9,898:14,810:8,952:6,979:6};
 let o='';CX.forEach((x,i)=>{let h=3+rnd()*5;const X=Math.round(x);for(const k in ov)if(Math.abs(k-X)<=2)h=ov[k];if(x>990)return;
  o+=`<rect x="${X}" y="${(479-h).toFixed(0)}" width="1.300" height="${h.toFixed(0)}" fill="${dirs[i]?'#18d020':'#b01414'}"/>`;});
 o+=`<rect x="311" y="441" width="1.300" height="38" fill="#18d020"/><rect x="315" y="441" width="1.300" height="38" fill="#b01414"/><rect x="284" y="456" width="1.300" height="23" fill="#18d020"/><rect x="587" y="432" width="1.300" height="47" fill="#18d020"/><rect x="423" y="456" width="1.300" height="23" fill="#b01414"/>`;
 return o;
}
const T=(t,y,c='#00d0e0')=>`<text x="4" y="${y+4}" font-family="DejaVu Sans" font-size="10.500" fill="${c}">${t}</text>`;
const tk=(y,l=6)=>`<rect x="${-l}" y="${y}" width="${l}" height="1" fill="#00d0e0"/>`;
const box=(y,h,t,by)=>`<rect x="1" y="${y}" width="52" height="${h}" fill="#fff"/><text x="5" y="${by}" font-family="DejaVu Sans" font-size="10.500" fill="#222">${t}</text>`;
const CFG={
 main:{top:98,h:208,bc:'#a0dca0',plot:()=>candles()+`<path d="M275 125.500L1134 240M899 257L985 252" stroke="#fff" stroke-width="2" fill="none"/>`,
  sc:()=>[[50,111],[45,136],[40,163],[35,195],[25,275]].map(([v,y])=>tk(y)+T(v+'.',y+1)).join('')+[123,149,179,213,252,300].map(y=>tk(y,3)).join('')+tk(232)+box(221,14,'31.41',232)+`<path d="M1 235h42v2H1z" fill="#000"/>`+T('28.68',243,'#e8e020')},
 macd:{top:308,h:58,bc:'#d8d8d8',plot:()=>hl(325,'#800000')+colorLine(MS,1.900)+colorLine(MF,1.900),
  sc:()=>[['1.',315,312],['0',327,325],['-1.',340,338],['-2.',353,351],['-3.',365,363]].map(([t,y,k])=>tk(k)+T(t,y)).join('')+[319,332,345,358].map(y=>tk(y,3)).join('')},
 rsi:{top:368,h:60,bc:'#d8d8d8',plot:()=>hl(373,'#5c0000',2)+hl(416,'#0a500a',2)+colorLine(RS,2.500,{cy:[[137,143],[476,482],[655,660]]})+`<path d="M903 414L1134 383" stroke="#fff" stroke-width="2"/>`,
  sc:()=>tk(385)+T('60.',385)+tk(394,3)+tk(405)+box(401,19,'43.716',415)+tk(424)+T('20.',426)},
 vol:{top:430,h:51,bc:'#d8d8d8',plot:()=>vols()+hl(479,'#0a8a0a'),
  sc:()=>[['1.5 Mr',439],['1. Mr',452],['0.5 Mr',466],['0',478]].map(([t,y])=>tk(y)+T(t,y)).join('')+[445,459,472].map(y=>tk(y,3)).join('')},
 mom:{top:483,h:54,bc:'#d8d8d8',plot:()=>hl(507,'#0a7a0a')+poly(MO,'#c8c8c8',1.100),
  sc:()=>[['120.',483],['110.',495],['100.',509],['90.',521],['80.',534]].map(([t,y])=>tk(y-1)+T(t,y)).join('')+[489,502,515,528].map(y=>tk(y,3)).join('')},
 stoch:{top:539,h:65,bc:'#d8d8d8',plot:()=>hl(554,'#7a0000')+hl(589,'#0a7a0a')+poly(SK,'#d00000',1.100)+poly(SD,'#18c8d8',1.200)+`<rect x="57" y="574" width="11" height="12" fill="#000"/>`,
  sc:()=>[['100.',543],['80.',555],['60.',567],['40.',579],['20.',590],['0',603]].map(([t,y])=>tk(y-1)+T(t,y)).join('')+[549,561,573,585,597].map(y=>tk(y,3)).join('')},
};
customElements.define('mx-panel',class extends HTMLElement{constructor(){super();this.attachShadow({mode:'open'});}
 connectedCallback(){const c=CFG[this.getAttribute('kind')];const main=this.getAttribute('kind')==='main';
  this.shadowRoot.innerHTML=`<style>:host{display:block;flex:none;height:${c.h}px;margin-left:2px;margin-bottom:2px;width:1180px}
  .r{display:flex;height:${c.h}px;background:#000;border-left:1px solid ${c.bc};box-sizing:border-box;position:relative;overflow:hidden}
  .s{flex:none;width:55px;border-left:1px solid #00d0e0;height:${c.h}px;background:#000}
  svg{flex:none;display:block;overflow:hidden}</style>
  <div class="r"><svg width="1123" height="${c.h}" viewBox="11 ${c.top} 1123 ${c.h}">${c.plot()}</svg><div class="s"><svg width="55" height="${c.h}" viewBox="0 ${c.top} 55 ${c.h}" style="overflow:visible">${c.sc()}</svg></div><slot></slot></div>`;
  if(main)this.style.cssText=`margin-bottom:0;border-bottom:2px solid #a0dca0;box-sizing:content-box`;
 }});
customElements.define('mx-label',class extends HTMLElement{constructor(){super();this.attachShadow({mode:'open'});}
 connectedCallback(){const t=this.getAttribute('title-text');
  this.shadowRoot.innerHTML=`<style>:host{position:absolute;display:block;font:10px/11px "Liberation Sans",sans-serif;background:#000;white-space:nowrap}
  .t{font:700 11px/12px "Liberation Sans",sans-serif;color:#f4f400;text-shadow:.5px .5px 0 #1a8a1a}</style>${t?`<span class="t">${t}</span>`:'<slot></slot>'}`;}});
const TIP=[['Açılış','30.10'],['Yüksek','30.42'],['Düşük','29.84'],['Kapanış','29.94'],['Ağ. Ort','30.09'],['Fark','-0.12']];
def('mx-tooltip',()=>`<style>:host{position:absolute;left:40px;top:2px;width:130px;height:100px;box-sizing:border-box;border:2px solid #fff;background:#fdc22e;font:11.200px/13.200px "DejaVu Sans",sans-serif;display:block;z-index:2;padding-top:3px}
.d{text-align:center;font-weight:700;color:#111;padding-left:14px}.g{display:grid;grid-template-columns:51px 72px;}.a{text-align:right;color:#555}.b{text-align:right;font-weight:700;color:#111}</style>
<div class="d">13.11.25</div><div class="g">${TIP.map(r=>`<span class="a">${r[0]}</span><span class="b">${r[1]}</span>`).join('')}</div>`);
const DT=[[44,'06.25'],[227,'08.25'],[320,'09.25'],[418,'10.25'],[516,'11.25'],[605,'12.25'],[707,'01.26'],[801,'02.26'],[890,'03.26'],[984,'04.26']];
def('mx-dateaxis',()=>`<style>:host{display:block;position:relative;flex:none;height:17px;width:1181px;margin-left:1px;background:#000;overflow:hidden}
svg{display:block}.c{position:absolute;left:58px;top:1px;width:123px;height:16px;box-sizing:border-box;border:1px solid #fff;background:#000;color:#f4f000;font:700 10.500px/14px "DejaVu Sans",sans-serif;text-align:center;white-space:nowrap;letter-spacing:.1px}</style>
${sv(1181,17,DT.map(([x,t])=>`<rect x="${x}" y="606" width="1" height="17" fill="#ddd"/><text x="${x+2}" y="621" font-family="DejaVu Sans" font-size="11" fill="#00d0e8">${t}</text>`).join(''),'9 606 1181 17')}
<div class="c">28.68 - 20 - 11:16:42</div>`);
def('mx-scroll',()=>`<style>:host{display:block;position:relative;flex:none;height:8px;width:1181px;margin-left:1px;background:#d6d6d6}
.w{position:absolute;left:0;top:0;width:1125px;height:8px;background:#fff}
.b{position:absolute;top:0;height:7px;background:#e4e4e4;border:1px solid #aaa;border-top-color:#fff;border-left-color:#fff;box-sizing:border-box;display:flex;align-items:center;justify-content:center}
.rf{position:absolute;left:1144px;top:-10px;width:18px;height:18px;background:linear-gradient(#f8f8f8,#cfcfcf);border:1px solid #eee;box-sizing:border-box;display:flex;align-items:center;justify-content:center}
.ar{position:absolute;left:1162px;top:-2px;width:19px;height:9px;display:flex;background:#ddd;justify-content:space-around;align-items:center}</style>
<div class="w"></div><div class="b" style="left:0;width:15px">${sv(5,5,'<path d="M4 1L1 2.500l3 1.500z" fill="#111"/>')}</div><div class="b" style="left:1103px;width:7px"></div><div class="b" style="left:1110px;width:15px">${sv(5,5,'<path d="M1 1l3 1.500L1 4z" fill="#111"/>')}</div>
<div class="rf">${sv(14,14,'<path fill="none" stroke="#1e5fb0" stroke-width="2.200" d="M2 7a5 5 0 0 1 8-4M12 7a5 5 0 0 1-8 4"/><path fill="#1e5fb0" d="M8 .5l4 2-3 3zM6 13.500l-4-2 3-3z"/>')}</div>
<div class="ar">${sv(7,8,'<path fill="#1020d8" d="M6 0v8L0 4z"/>')}${sv(7,8,'<path fill="#1020d8" d="M1 0v8l6-4z"/>')}</div>`);

const badge=(t,c)=>`<span class="bd" style="background:${c||'#3a3f42'}">${t}</span>`;
const task=[
 [43,343,`<span class="sr">${sv(18,18,'<circle cx="11" cy="7" r="5" fill="none" stroke="#ddd" stroke-width="1.300"/><path stroke="#ddd" stroke-width="1.500" d="M7.500 11L2 16.500"/>')}<span class="st">Aramak için buraya yazın</span></span>`],
 [356,374,sv(18,18,'<path fill="none" stroke="#ddd" stroke-width="1.200" d="M2 2h10M2 16h10M3 5h8v8H3zM15 3v1M15 7v4M15 14v1"/>')],
 [399,421,sv(22,22,'<g fill="none" stroke="#e8e8e8" stroke-width="1.600"><ellipse cx="11" cy="11" rx="9.500" ry="4.800"/><ellipse cx="11" cy="11" rx="9.500" ry="4.800" transform="rotate(60 11 11)"/><ellipse cx="11" cy="11" rx="9.500" ry="4.800" transform="rotate(120 11 11)"/></g>')],
 [442,464,sv(22,22,'<defs><linearGradient id="e1" x1="0" y1="0" x2="1" y2="1"><stop offset="0" stop-color="#35c1f1"/><stop offset="1" stop-color="#0c59a4"/></linearGradient><linearGradient id="e2" x1="0" y1="0" x2="1" y2="1"><stop offset="0" stop-color="#5fd86a"/><stop offset="1" stop-color="#2fb8c8"/></linearGradient></defs><circle cx="11" cy="11" r="10.500" fill="url(#e1)"/><path fill="url(#e2)" d="M3 7C6 0 19 0 21.500 11c0 4-4 5-7 4-4-1-1-4-3-6-3-2-6-1-8.500-2z"/><path fill="#134" opacity=".5" d="M2 13c1 5 6 8 11 7-5-2-6-7-3-10-4 0-6 1-8 3z"/>')],
 [485,507,`<span class="ib">${sv(22,22,'<path fill="none" stroke="#2ed14a" stroke-width="2" d="M3 20l1.300-5A9 9 0 1 1 7.500 18.500z"/><path fill="#2ed14a" d="M8 6.500c1-1 2-1 2.300 0l.8 2-.9 1.300c.6 1.200 1.500 2 2.700 2.700l1.400-1 1.800 1c.9.500.9 1.400 0 2.200-1.800 1.800-8-1.800-8.100-8.200z"/>')}${badge('1')}</span>`],
 [530,552,`<span class="ib">${sv(22,22,'<defs><linearGradient id="tg" x1="0" y1="0" x2="0" y2="1"><stop offset="0" stop-color="#35a8e8"/><stop offset="1" stop-color="#1a88cc"/></linearGradient></defs><circle cx="10" cy="10" r="9.500" fill="url(#tg)"/><path fill="#fff" d="M3 10l13-5-3 10-3-2.500-2 2v-3.500z"/>')}${badge('16','#7d7d7d')}</span>`],
 [571,593,''],
 [616,638,sv(21,21,'<rect width="21" height="21" rx="3" fill="#0e0e0e"/><path fill="#fff" d="M3 6.500h8.500v3H9v6H6v-6H3zM14.500 6.500H18.500L15 15.500h-3.500z"/><circle cx="12.800" cy="8" r="1.500" fill="#fff"/>')],
 [659,681,`<span class="ib">${sv(21,21,'<circle cx="10.500" cy="10.500" r="10" fill="#0c0c0c"/><path stroke="#fff" stroke-width="1.700" d="M6 5l9 11M15 5L6 16"/>')}${badge('1','#2c3034')}</span>`],
 [701,722,sv(21,15,'<rect width="21" height="15" rx="3.500" fill="#ee1c2e"/><path fill="#fff" d="M8 4.500l6 3-6 3z"/>')],
 [967,978,sv(11,7,'<path fill="none" stroke="#ddd" stroke-width="1.200" d="M.5 6.500L5.500 1l5 5.500"/>')],
 [986,1000,sv(14,13,'<path fill="#eee" d="M14 0L0 6l4 2 7-5-5 6 0 4 2-2 3 2z"/><circle cx="3" cy="11" r="1.500" fill="#aaa"/>')],
 [1007,1022,sv(15,13,'<path fill="none" stroke="#ddd" stroke-width="1.100" d="M1 4.500h3l3-3v10l-3-3H1zM10 5l4 4M14 5l-4 4"/>')],
 [1029,1044,sv(15,11,'<rect x=".5" y="1.500" width="12" height="8" rx="1" fill="none" stroke="#ddd"/><rect x="2" y="3" width="5" height="5" fill="#ddd"/><path fill="#ddd" d="M13 4h2v3h-2z"/>')],
 [1050,1065,sv(15,16,'<rect x="1.500" y="3.500" width="9" height="9" rx="1.500" fill="none" stroke="#ddd"/><path fill="#ddd" d="M11 6l4-2v8l-4-2z"/><path fill="none" stroke="#ddd" d="M2 1c2-.8 6-.8 8 0M2 15c2 .8 6 .8 8 0"/>')],
 [1071,1091,sv(20,12,'<rect x=".5" y=".5" width="19" height="11" rx="1" fill="none" stroke="#ddd"/><path stroke="#ddd" stroke-dasharray="1.500 .7" stroke-width="1.300" d="M2 3.500h16M2 6h16"/><path stroke="#ddd" stroke-width="1.300" d="M5 8.800h10"/>')],
 [1099,1149,`<span class="ck"><span>11:16</span><span>03.04.2026</span></span>`],
 [1162,1186,`<span class="ib">${sv(16,15,'<path fill="#eee" d="M1 1h14v10H7l-3 3v-3H1z"/><path stroke="#333" d="M3 4h10M3 7h10"/>')}<span class="bd" style="background:#3a3f42;border:1px solid #999;right:-4px;bottom:-6px">1</span></span>`],
];
def('mx-taskbar',()=>`<style>:host{display:flex;align-items:center;height:35px;flex:none;background:#1b2e36;position:relative;font-family:"Open Sans",sans-serif}
.it{display:flex;align-items:center;justify-content:center;flex:none;height:35px;position:relative}
.start{position:absolute;left:14px;top:10px}
.sr{display:flex;align-items:center;width:300px;height:35px;background:#3b3e40;padding-left:10px;box-sizing:border-box}.st{color:#c9c9c9;font-size:12.600px;margin-left:7px}
.ib{position:relative;display:block}.bd{position:absolute;right:-6px;bottom:-5px;min-width:14px;height:14px;padding:0 1px;box-sizing:border-box;border-radius:8px;color:#eee;font:700 9.500px/12px "Open Sans",sans-serif;text-align:center;border:1px solid #888}
.ck{display:flex;flex-direction:column;align-items:center;color:#ececec;font-size:10.800px;line-height:16px}
.act{position:absolute;left:561px;top:0;width:43px;height:35px;background:#485a62}
.mm{position:absolute;left:571px;top:6px;width:22px;height:22px;background:#fff;color:#1f1f6b;font:700 21px/22px "Liberation Sans";text-align:center}
.ul{position:absolute;bottom:0;height:2px;background:#6fb8ec}</style>
<span class="act"></span>
<span class="start">${sv(15,15,'<path fill="#fff" d="M0 2l6.500-1v6H0zM7.500.800L15 0v7H7.500zM0 8h6.500v6L0 13.200zM7.500 8H15v7l-7.500-.9z"/>')}</span>
${place(0,task)}<span class="mm">M</span>
${[[436,470],[522,553],[562,603],[608,638],[652,682]].map(([a,b])=>`<span class="ul" style="left:${a}px;width:${b-a}px"></span>`).join('')}`);
</script>
</body></html>
